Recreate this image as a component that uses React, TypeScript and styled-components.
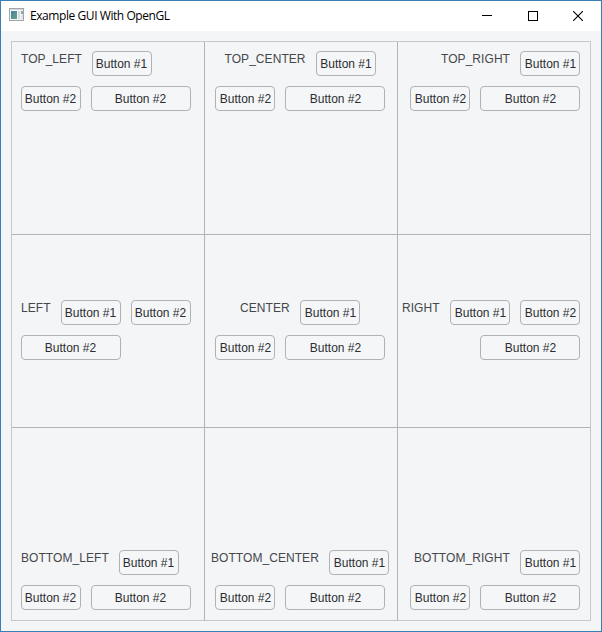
import React from "react";
import styled, { createGlobalStyle } from "styled-components";

const GlobalStyle = createGlobalStyle`
  * { box-sizing: border-box; }
  body { margin: 0; overflow: hidden; }
`;

type Align = "flex-start" | "center" | "flex-end";

const Window = styled.div`
  width: 602px;
  height: 632px;
  display: flex;
  flex-direction: column;
  border: 1px solid #3c7fb5;
  background: #f4f5f7;
  font-family: "Liberation Sans", Arial, sans-serif;
`;

const TitleBar = styled.header`
  height: 30px;
  flex: none;
  display: flex;
  align-items: center;
  padding-left: 8px;
  background: #fff;
`;

const Title = styled.h1`
  flex: 1;
  margin: 0 0 0 5px;
  font: 400 12px/16px "Segoe UI", "Open Sans", sans-serif;
  letter-spacing: -0.43px;
  color: #000;
  white-space: nowrap;
`;

const WindowButton = styled.button`
  width: 45.5px;
  height: 30px;
  display: flex;
  align-items: center;
  justify-content: center;
  padding: 0;
  border: 0;
  background: none;
`;

const Frame = styled.main`
  width: 580px;
  height: 580px;
  margin: 10px;
  display: grid;
  grid-template: repeat(3, 193px) / repeat(3, 193px);
  border: solid #c6c8ca;
  border-width: 1px 0 0 1px;
`;

const Cell = styled.section<{ $h: Align; $v: Align }>`
  display: flex;
  flex-direction: column;
  gap: 10px;
  align-items: ${(p) => p.$h};
  justify-content: ${(p) => p.$v};
  padding: 9px ${(p) => (p.$h === "center" ? 11 : 10)}px 10px 9px;
  ${(p) => p.$v === "center" && "padding-top: 8px;"}
  border: solid #b2b4b6;
  border-width: 0 1px 1px 0;
  &:nth-child(3n) { border-right-color: #c6c8ca; }
  &:nth-child(n + 7) { border-bottom-color: #c6c8ca; }
`;

const Row = styled.div`
  display: flex;
  flex: none;
  gap: 10px;
`;

const Label = styled.span<{ $width: number }>`
  width: ${(p) => p.$width}px;
  height: 16px;
  flex: none;
  font-size: 12px;
  line-height: 16px;
  letter-spacing: 0.06px;
  color: #45474a;
  white-space: nowrap;
`;

const Button = styled.button<{ $wide?: boolean; $h: Align }>`
  width: ${(p) => (p.$wide ? 100 : 60)}px;
  height: 25px;
  flex: none;
  padding: ${(p) => (p.$h === "flex-start" ? "1px 1px 0 0" : "1px 0 0 1px")};
  border: 1px solid #b0b2b5;
  border-radius: 4px;
  background: #f5f6f8;
  font: 12px/16px "Liberation Sans", Arial, sans-serif;
  color: #2c2d30;
  white-space: nowrap;
`;

interface CellData {
  name: string;
  width: number;
  h: Align;
  v: Align;
}

const cells: CellData[] = [
  { name: "TOP_LEFT", width: 61, h: "flex-start", v: "flex-start" },
  { name: "TOP_CENTER", width: 81, h: "center", v: "flex-start" },
  { name: "TOP_RIGHT", width: 69, h: "flex-end", v: "flex-start" },
  { name: "LEFT", width: 30, h: "flex-start", v: "center" },
  { name: "CENTER", width: 50, h: "center", v: "center" },
  { name: "RIGHT", width: 38, h: "flex-end", v: "center" },
  { name: "BOTTOM_LEFT", width: 88, h: "flex-start", v: "flex-end" },
  { name: "BOTTOM_CENTER", width: 108, h: "center", v: "flex-end" },
  { name: "BOTTOM_RIGHT", width: 96, h: "flex-end", v: "flex-end" },
];

/* Short labels leave room for the second button on the first row. */
const SHORT_LABEL = 40;

function AnchorCell({ name, width, h, v }: CellData) {
  const fits = width < SHORT_LABEL;
  const second = <Button $h={h}>Button #2</Button>;
  return (
    <Cell $h={h} $v={v}>
      <Row>
        <Label $width={width}>{name}</Label>
        <Button $h={h}>Button #1</Button>
        {fits && second}
      </Row>
      <Row>
        {!fits && second}
        <Button $wide $h={h}>Button #2</Button>
      </Row>
    </Cell>
  );
}

const AppIcon = () => (
  <svg width="16" height="16" viewBox="0 1 16 16" shapeRendering="crispEdges">
    <defs>
      <linearGradient id="pane" x2="1" y2="1">
        <stop stopColor="#4a7fa0" />
        <stop offset="1" stopColor="#5fa58a" />
      </linearGradient>
    </defs>
    <rect x="0.5" y="1.5" width="14" height="12" fill="#f4f4f4" stroke="#a2a4a8" />
    <rect x="1" y="2" width="13" height="1" fill="#d5d9de" />
    <rect x="2" y="4" width="6" height="8" fill="url(#pane)" />
    <rect x="9" y="4" width="2" height="8" fill="#d7dce0" />
    <rect x="12" y="4" width="2" height="3" fill="#83a8a8" />
    <rect x="12" y="8" width="2" height="4" fill="#e0e3e5" />
  </svg>
);

export default function App() {
  return (
    <Window>
      <GlobalStyle />
      <TitleBar>
        <AppIcon />
        <Title>Example GUI With OpenGL</Title>
        <WindowButton aria-label="Minimize">
          <svg width="10" height="10"><path d="M0 4.5H10" stroke="#000" shapeRendering="crispEdges" /></svg>
        </WindowButton>
        <WindowButton aria-label="Maximize">
          <svg width="10" height="10"><rect x=".5" y=".5" width="9" height="9" fill="none" stroke="#000" /></svg>
        </WindowButton>
        <WindowButton aria-label="Close">
          <svg width="10" height="10"><path d="M0 0L10 10M10 0L0 10" stroke="#000" strokeWidth="1.1" /></svg>
        </WindowButton>
      </TitleBar>
      <Frame>
        {cells.map((cell) => (
          <AnchorCell key={cell.name} {...cell} />
        ))}
      </Frame>
    </Window>
  );
}
